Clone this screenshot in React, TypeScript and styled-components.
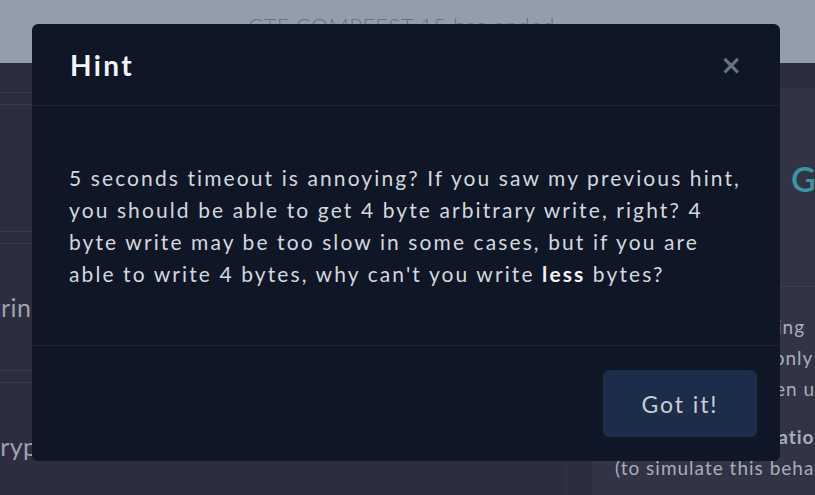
import styled, {createGlobalStyle} from "styled-components";

const GlobalStyle = createGlobalStyle`
    html, body {
        margin: 0;
        padding: 0;
        overflow: hidden;
        background: #2c2d3e;
        font-family: "Lato", "Noto Sans", sans-serif;
    }
`

const Page = styled.div`
    width: 815px;
    height: 495px;
    overflow: hidden;
`

const Banner = styled.div`
    height: 63px;
    box-sizing: border-box;
    padding: 15px 12px 0 0;
    background: #929fab;
    color: #667280;
    font-size: 22px;
    line-height: 22px;
    letter-spacing: 0.5px;
    text-align: center;
    font-weight: 300;
`

const Content = styled.div`
    display: grid;
    grid-template-columns: 607px 25px 630px;
    margin-left: -40px;
`

const LeftColumn = styled.div`
    display: flex;
    flex-direction: column;
    gap: 11px;
    border-right: 1px solid #343547;
    height: 432px;
`

const ListHeader = styled.div`
    height: 29px;
    flex-shrink: 0;
    border-bottom: 1px solid #3a3b4e;
`

const Card = styled.div<{ $indent?: number }>`
    height: 128px;
    box-sizing: border-box;
    border-top: 1px solid #3a3b4e;
    border-bottom: 1px solid #3a3b4e;
    display: flex;
    align-items: center;
    padding-left: ${p => p.$indent ?? 18}px;
    flex-shrink: 0;
`

const CardTitle = styled.span`
    color: #9ba3b4;
    font-size: 25px;
    letter-spacing: 0.5px;
`

const RightPanel = styled.div`
    grid-column: 3;
    margin-top: 25px;
    background: #323446;
    height: 420px;
`

const PanelHeader = styled.div`
    height: 199px;
    box-sizing: border-box;
    padding-bottom: 18px;
    border-bottom: 1px solid #3c3e52;
    display: flex;
    align-items: center;
    justify-content: center;
`

const PanelTitle = styled.h2`
    margin: 0;
    color: #3a95a4;
    font-size: 34px;
    font-weight: 600;
`

const Description = styled.div`
    padding: 24px 23px;
    color: #a7adbb;
    font-size: 19px;
    line-height: 31px;
    letter-spacing: 1px;
    white-space: nowrap;
`

const Paragraph = styled.p`
    margin: 0 0 17px;
`

const Strong = styled.strong`
    font-weight: 700;
`

const Overlay = styled.div`
    position: fixed;
    inset: 0;
    padding: 24px 0 0 32px;
`

const Modal = styled.div`
    width: 748px;
    background: #0f1727;
    border-radius: 6px;
    color: #d1d5db;
`

const ModalHeader = styled.div`
    height: 82px;
    box-sizing: border-box;
    padding: 0 38px 0 38px;
    display: flex;
    align-items: center;
    justify-content: space-between;
    border-bottom: 1px solid #1b2440;
`

const ModalTitle = styled.h3`
    margin: 0;
    color: #f3f4f6;
    font-size: 28px;
    font-weight: 700;
    letter-spacing: 2.4px;
`

const CloseButton = styled.button`
    background: none;
    border: none;
    padding: 0;
    color: #6b7280;
    font-size: 26px;
    font-weight: 700;
    line-height: 1;
    font-family: "DejaVu Sans", sans-serif;
    cursor: pointer;
`

const ModalBody = styled.div`
    padding: 56px 35px 55px 37px;
    font-size: 21px;
    line-height: 32px;
    letter-spacing: 2.1px;
    color: #d3d7de;

    b {
        color: #f3f4f6;
    }
`

const ModalFooter = styled.div`
    display: flex;
    justify-content: flex-end;
    padding: 24px 23px;
    border-top: 1px solid #1b2440;
`

const ConfirmButton = styled.button`
    width: 154px;
    height: 67px;
    border: none;
    border-radius: 6px;
    background: #1b2d4a;
    color: #c9cdd5;
    font-family: inherit;
    font-size: 23px;
    letter-spacing: 1.9px;
    cursor: pointer;
`

export default function App() {
    return <Page>
        <GlobalStyle/>
        <Banner>CTF COMPFEST 15 has ended</Banner>
        <Content>
            <LeftColumn>
                <ListHeader/>
                <Card/>
                <Card><CardTitle>String</CardTitle></Card>
                <Card $indent={23}><CardTitle>Crypto</CardTitle></Card>
            </LeftColumn>
            <RightPanel>
                <PanelHeader>
                    <PanelTitle>Gacha Machine</PanelTitle>
                </PanelHeader>
                <Description>
                    <Paragraph>
                        This host is handling<br/>
                        It accepts inputs only<br/>
                        Your prize is hidden unless you win.
                    </Paragraph>
                    <Paragraph>
                        <Strong>There is one limitation of 5 seconds</Strong><br/>
                        (to simulate this behaviour locally)
                    </Paragraph>
                </Description>
            </RightPanel>
        </Content>
        <Overlay>
            <Modal>
                <ModalHeader>
                    <ModalTitle>Hint</ModalTitle>
                    <CloseButton>×</CloseButton>
                </ModalHeader>
                <ModalBody>
                    5 seconds timeout is annoying? If you saw my previous hint, you should be able to get 4 byte
                    arbitrary write, right? 4 byte write may be too slow in some cases, but if you are able to write
                    4 bytes, why can't you write <b>less</b> bytes?
                </ModalBody>
                <ModalFooter>
                    <ConfirmButton>Got it!</ConfirmButton>
                </ModalFooter>
            </Modal>
        </Overlay>
    </Page>
}
